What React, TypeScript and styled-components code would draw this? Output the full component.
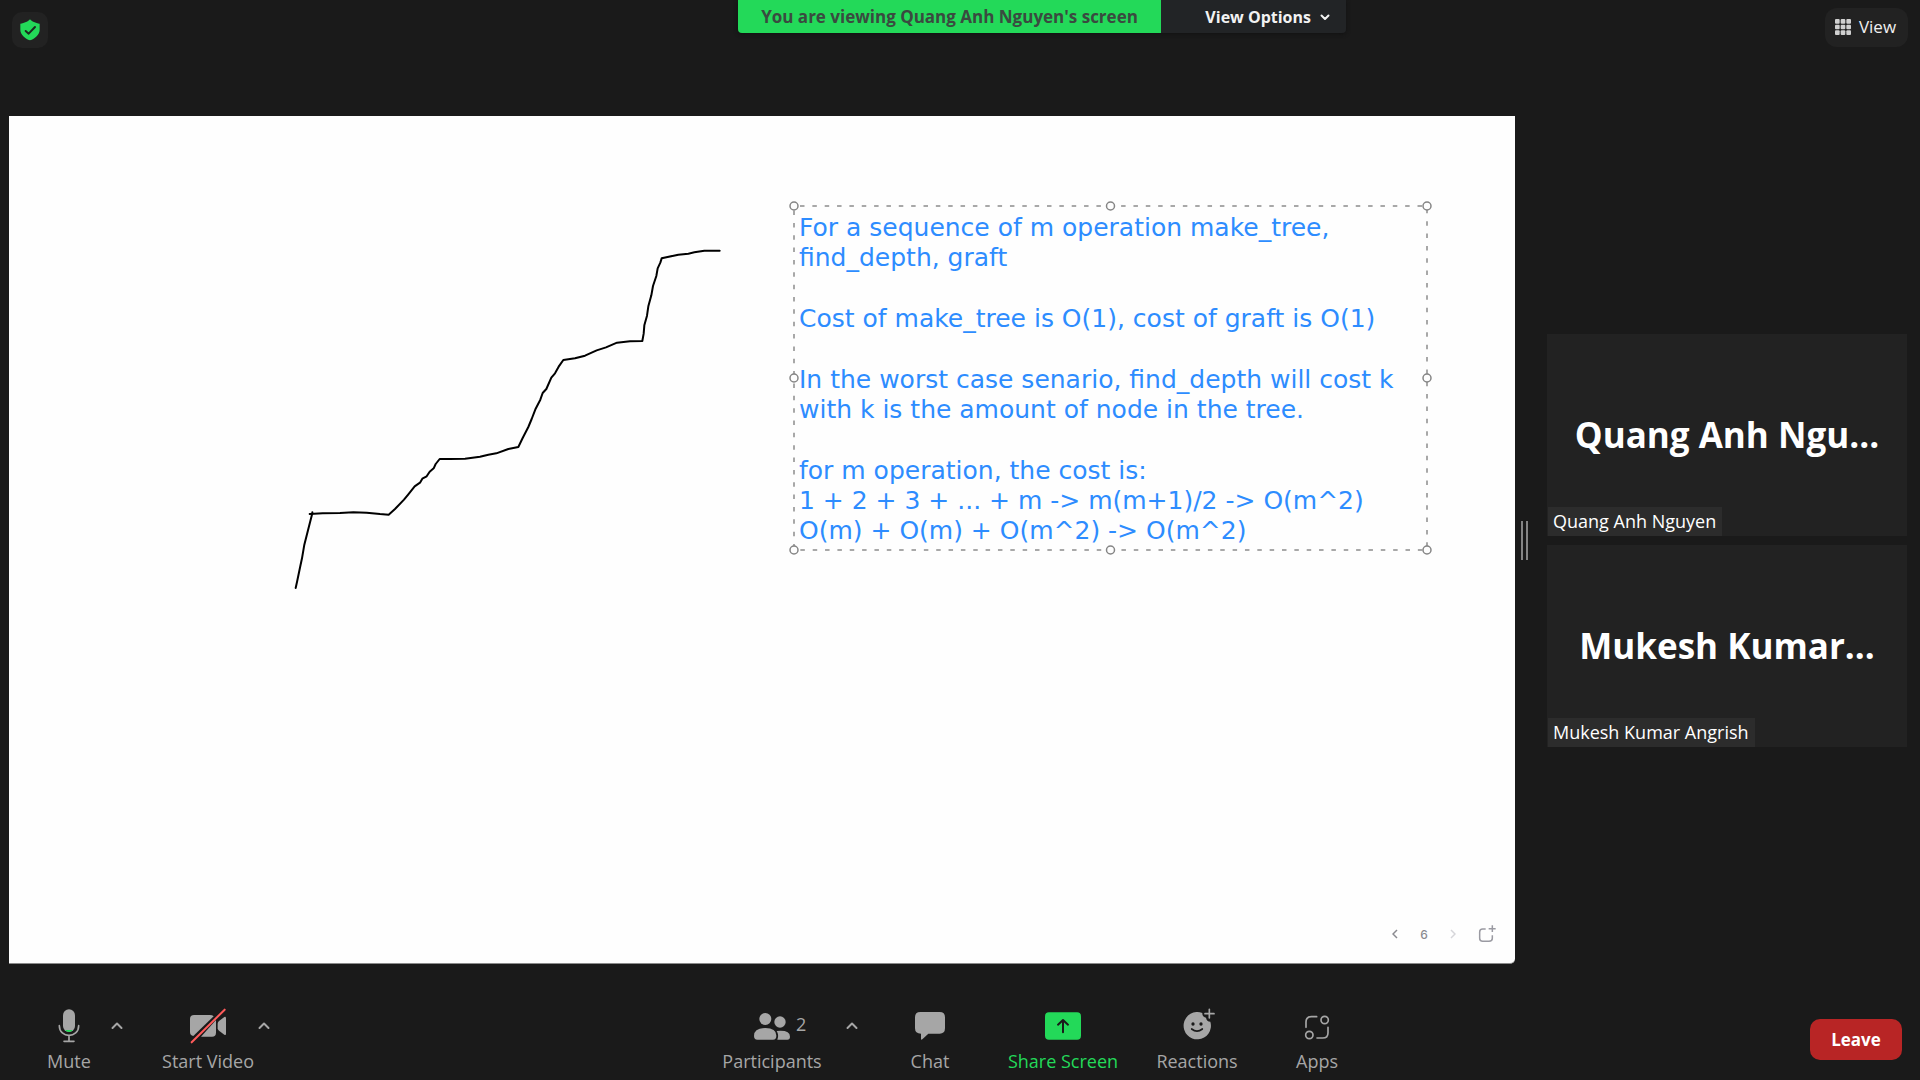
import React from "react";
import styled, { createGlobalStyle } from "styled-components";

const UI_FONT = `"Segoe UI", "Open Sans", "Noto Sans", sans-serif`;
const NOTE_FONT = `Verdana, "DejaVu Sans", sans-serif`;
const GREEN = "#23d959";
const GREY = "#a6a6a6";
const BG = "#1a1a1a";

const GlobalStyle = createGlobalStyle`
  *, *::before, *::after { box-sizing: border-box; }
  body { margin: 0; background: ${BG}; font-family: ${UI_FONT}; }
  button { margin: 0; padding: 0; border: 0; background: none; font: inherit; color: inherit; cursor: pointer; }
  svg { display: block; }
`;

const Page = styled.div`
  display: flex;
  flex-direction: column;
  min-height: 100vh;
  background: ${BG};
  color: #fff;
`;

/* ---------- top bar ---------- */

const TopBar = styled.header`
  display: grid;
  grid-template-columns: 9fr auto 7fr;
  align-items: start;
  min-height: 116px;
`;

const ShieldButton = styled.button`
  display: grid;
  place-items: center;
  width: 36px;
  height: 36px;
  margin: 12px;
  border-radius: 10px;
  background: #222;
`;

const Banner = styled.div`
  display: flex;
  height: 33px;
  border-radius: 0 0 4px 4px;
  overflow: hidden;
  font-size: 17px;
  line-height: 34px;
  font-weight: 700;
  white-space: nowrap;
  box-shadow: 0 1px 4px #111;
`;

const BannerText = styled.div`
  min-width: 423px;
  padding: 0 12px;
  text-align: center;
  background: ${GREEN};
  color: #3a4a40;
`;

const ViewOptions = styled.button`
  display: flex;
  align-items: center;
  justify-content: flex-end;
  gap: 9px;
  min-width: 185px;
  padding: 0 16px;
  background: #222426;
  color: #f2f2f2;
  font-size: 16px;
`;

const ViewButton = styled.button`
  display: flex;
  align-items: center;
  justify-content: center;
  justify-self: end;
  gap: 8px;
  width: 83px;
  height: 39px;
  margin: 8px 12px;
  padding: 0 2px 2px 0;
  border-radius: 12px;
  background: #222;
  color: #f0f0f0;
  font-size: 17px;
`;

/* ---------- shared board ---------- */

const Main = styled.main`
  display: flex;
  flex: 1;
  padding: 0 13px 0 9px;
`;

const Board = styled.section`
  position: relative;
  display: flex;
  flex: 1;
  flex-direction: column;
  align-items: flex-end;
  justify-content: flex-end;
  min-width: 0;
  border-bottom: 1px solid #8a8a8a;
  border-radius: 0 0 5px 0;
  background: #fefefe;
`;

const Sketch = styled.svg`
  position: absolute;
  left: 271px;
  top: 114px;
  width: 460px;
  height: 370px;
`;

const Note = styled.div`
  position: absolute;
  left: 785px;
  top: 90px;
  display: flex;
  flex-direction: column;
  gap: 31px;
  width: 633px;
  padding: 7px 0 4px 5px;
  color: #2d8cff;
  font-family: ${NOTE_FONT};
  font-size: 25px;
  line-height: 30px;
  white-space: nowrap;

  p { margin: 0; }
`;

const NoteFrame = styled.svg`
  position: absolute;
  inset: 0;
  width: 100%;
  height: 100%;
  overflow: visible;
`;

const Pager = styled.nav`
  display: flex;
  align-items: center;
  gap: 16px;
  padding: 0 19px 19px 0;
  color: #8a8a90;
  font-family: Inter, sans-serif;
  font-size: 12px;
  font-weight: 500;
`;

const PagerButton = styled.button`
  display: grid;
  place-items: center;
  width: 18px;
  height: 20px;

  &:disabled { color: #d6d6da; }
`;

const PageNumber = styled.span`
  width: 8px;
  text-align: center;
`;

/* ---------- side panel ---------- */

const Divider = styled.div`
  display: flex;
  align-items: center;
  width: 32px;
  padding-left: 6px;
`;

const Grip = styled.span`
  width: 7px;
  height: 39px;
  border: solid #858585;
  border-width: 0 2px;
`;

const Gallery = styled.aside`
  display: flex;
  flex-direction: column;
  justify-content: center;
  gap: 9px;
  width: 360px;
  padding-top: 1px;
`;

const Tile = styled.article`
  position: relative;
  display: grid;
  place-items: center;
  height: 202px;
  background: #222;
`;

const TileName = styled.h2`
  margin: 0;
  font-size: 35px;
  line-height: 48px;
  font-weight: 700;
`;

const TileTag = styled.span`
  position: absolute;
  left: 1px;
  bottom: 0;
  padding: 0 6px 0 5px;
  background: #2c2c2c;
  font-size: 18px;
  line-height: 29px;
`;

/* ---------- toolbar ---------- */

const Toolbar = styled.footer`
  display: flex;
  align-items: flex-start;
  justify-content: space-between;
  min-height: 116px;
  padding: 44px 18px 7px 29px;
  color: ${GREY};
`;

const Group = styled.div<{ $end?: number }>`
  display: flex;
  padding-right: ${(p) => p.$end ?? 0}px;
`;

const Tool = styled.button<{ $width: number; $accent?: boolean; $before?: number }>`
  display: flex;
  flex-direction: column;
  gap: 5px;
  width: ${(p) => p.$width}px;
  margin-left: ${(p) => p.$before ?? 0}px;
  color: ${(p) => (p.$accent ? GREEN : "inherit")};
  font-size: 18px;
  line-height: 24px;
  font-weight: 500;
  text-align: center;
  white-space: nowrap;
`;

const IconRow = styled.span`
  display: grid;
  grid-template-columns: 1fr 36px 1fr;
  width: 100%;
`;

const ToolIcon = styled.svg`
  grid-column: 2;
  width: 36px;
  height: 36px;
`;

const Count = styled.span`
  padding: 4px 6px;
  text-align: left;
`;

const ToolLabel = styled.span`
  width: 100%;
`;

const CaretButton = styled.button`
  display: grid;
  place-items: center;
  width: 16px;
  height: 36px;
`;

const LeaveButton = styled.button`
  width: 92px;
  height: 41px;
  margin-top: 11px;
  border-radius: 10px;
  background: #b82525;
  color: #fff;
  font-size: 17px;
  font-weight: 700;
`;

const Caret = ({ label }: { label: string }) => (
  <CaretButton aria-label={label}>
    <svg width="12" height="8" viewBox="0 0 12 8" fill="none" stroke="currentColor" strokeWidth="2" strokeLinecap="round" strokeLinejoin="round">
      <path d="M1.5 6 6 1.5 10.5 6" />
    </svg>
  </CaretButton>
);

type ToolItemProps = {
  label: string;
  width: number;
  viewBox: string;
  count?: number;
  accent?: boolean;
  before?: number;
  children: React.ReactNode;
};

const ToolItem = ({ label, width, viewBox, count, accent, before, children }: ToolItemProps) => (
  <Tool $width={width} $accent={accent} $before={before}>
    <IconRow>
      <ToolIcon viewBox={viewBox} fill="currentColor" aria-hidden="true">
        {children}
      </ToolIcon>
      {count !== undefined && <Count>{count}</Count>}
    </IconRow>
    <ToolLabel>{label}</ToolLabel>
  </Tool>
);

const HANDLES = [
  ["0%", "0%"], ["50%", "0%"], ["100%", "0%"],
  ["0%", "50%"], ["100%", "50%"],
  ["0%", "100%"], ["50%", "100%"], ["100%", "100%"],
];

const PEOPLE = [
  { short: "Quang Anh Ngu...", full: "Quang Anh Nguyen" },
  { short: "Mukesh Kumar...", full: "Mukesh Kumar Angrish" },
];

export default function App() {
  return (
    <Page>
      <GlobalStyle />
      <TopBar>
        <ShieldButton aria-label="Meeting information">
          <svg width="20" height="22" viewBox="0 0 60 66">
            <path d="M30 1C35 7 47 13 59 14V32C59 46 45 59 30 64 15 59 1 46 1 32V14C13 13 25 7 30 1Z" fill={GREEN} />
            <path d="M17 36 26 44 45 24" fill="none" stroke="#1c2a20" strokeWidth="6" strokeLinecap="round" strokeLinejoin="round" />
          </svg>
        </ShieldButton>
        <Banner>
          <BannerText>You are viewing Quang Anh Nguyen's screen</BannerText>
          <ViewOptions>
            View Options
            <svg width="10" height="8" viewBox="0 0 10 8" fill="none" stroke="currentColor" strokeWidth="2" strokeLinecap="round" strokeLinejoin="round">
              <path d="M1.5 2.5 5 6 8.500 2.500" />
            </svg>
          </ViewOptions>
        </Banner>
        <ViewButton>
          <svg width="16" height="16" viewBox="0 0 48 48" fill="#d0d0d0">
            {[0, 17, 34].map((y) => [0, 17, 34].map((x) => <rect key={`${x}-${y}`} x={x} y={y} width="14" height="14" rx="3" />))}
          </svg>
          View
        </ViewButton>
      </TopBar>

      <Main>
        <Board>
          <Sketch viewBox="0 0 1380 1110" fill="none" stroke="#000" strokeWidth="6" strokeLinecap="round" strokeLinejoin="round" role="img" aria-label="Staircase curve">
            <path d="M47 1074 51 1056 61 1008 66 985 73 944 84 901 97 850 97 847" />
            <path d="M89 852 128 850 180 849 220 847 260 848 300 852 326 854 345 837 372 809 385 793 404 769 420 758 427 746 440 739 449 725 461 715 467 702 479 687 510 687 555 686 600 680 625 674 649 670 685 657 715 651 728 624 745 591 755 567 767 536 781 509 788 489 799 477 814 443 825 430 836 410 850 390 885 385 915 377 950 361 978 352 1011 338 1050 334 1087 333 1091 311 1093 286 1101 257 1105 229 1114 196 1119 168 1129 138 1133 115 1141 98 1145 85 1195 74 1225 71 1243 67 1273 62 1319 62" />
          </Sketch>
          <Note>
            <NoteFrame aria-hidden="true">
              <rect width="100%" height="100%" fill="none" stroke="#8c8c8c" strokeWidth="1.500" strokeDasharray="4.500 7.850" strokeDashoffset="-6" />
              {HANDLES.map(([cx, cy]) => (
                <circle key={cx + cy} cx={cx} cy={cy} r="4" fill="#fefefe" stroke="#858585" strokeWidth="1.500" />
              ))}
            </NoteFrame>
            <p>For a sequence of m operation make_tree,<br />find_depth, graft</p>
            <p>Cost of make_tree is O(1), cost of graft is O(1)</p>
            <p>In the worst case senario, find_depth will cost k<br />with k is the amount of node in the tree.</p>
            <p>for m operation, the cost is:<br />1 + 2 + 3 + ... + m -&gt; m(m+1)/2 -&gt; O(m^2)<br />O(m) + O(m) + O(m^2) -&gt; O(m^2)</p>
          </Note>
          <Pager aria-label="Whiteboard pages">
            <PagerButton aria-label="Previous page">
              <svg width="6" height="10" viewBox="0 0 6 10" fill="none" stroke="currentColor" strokeWidth="1.500"><path d="M5 1 1 5l4 4" /></svg>
            </PagerButton>
            <PageNumber>6</PageNumber>
            <PagerButton aria-label="Next page" disabled>
              <svg width="6" height="10" viewBox="0 0 6 10" fill="none" stroke="currentColor" strokeWidth="1.500"><path d="M1 1l4 4-4 4" /></svg>
            </PagerButton>
            <PagerButton aria-label="New page">
              <svg width="18" height="18" viewBox="0 0 54 54" fill="none" stroke="#9a9aa2" strokeWidth="4.500">
                <path d="M23 12H14Q5 12 5 21V40Q5 49 14 49H33Q43 49 43 40V31M43 1V21M32 11H53" />
              </svg>
            </PagerButton>
          </Pager>
        </Board>
        <Divider><Grip /></Divider>
        <Gallery>
          {PEOPLE.map((p) => (
            <Tile key={p.full}>
              <TileName>{p.short}</TileName>
              <TileTag>{p.full}</TileTag>
            </Tile>
          ))}
        </Gallery>
      </Main>

      <Toolbar>
        <Group>
          <ToolItem label="Mute" width={80} viewBox="153 84 108 108">
            <rect x="189" y="88" width="36" height="68" rx="18" />
            <path d="M195 150H219Q214 156 207 156T195 150Z" fill={GREEN} />
            <path d="M178 137C178 176 236 176 236 137M207 166V184M192 184H222" fill="none" stroke="currentColor" strokeWidth="5" strokeLinecap="round" />
          </ToolItem>
          <Caret label="Audio options" />
          <ToolItem label="Start Video" width={96} before={35} viewBox="570 84 108 108">
            <path d="M582 105H630Q637 105 641 109L580 168Q570 166 570 156V117Q570 105 582 105Z" />
            <path d="M648 120V158Q648 170 636 170H603Z" />
            <path d="M653 131Q653 126 657 123L673 111Q678 109 678 115V161Q678 167 673 164L657 152Q653 149 653 145Z" />
            <path d="M575 187 674 89" fill="none" stroke="#ff5b5b" strokeWidth="6" strokeLinecap="round" />
          </ToolItem>
          <Caret label="Video options" />
        </Group>

        <Group $end={16}>
          <ToolItem label="Participants" width={144} count={2} viewBox="162 84 108 108">
            <circle cx="196" cy="117" r="18" />
            <circle cx="240" cy="126" r="17" />
            <path d="M162 168Q162 144 196 144T229 168Q229 179 219 179H172Q162 179 162 168Z" />
            <path d="M230 153Q270 149 270 170 270 179 262 179H232Q238 166 230 153Z" />
          </ToolItem>
          <Caret label="Participant options" />
          <ToolItem label="Chat" width={140} viewBox="636 84 108 108">
            <path d="M661 96H719Q735 96 735 112V145Q735 161 719 161H685L667 178Q663 181 663 176V161Q645 161 645 145V112Q645 96 661 96Z" />
          </ToolItem>
          <ToolItem label="Share Screen" width={126} accent viewBox="135 84 108 108">
            <rect x="135" y="97" width="108" height="82" rx="12" />
            <path d="M189 157V121M174 134 189 120 204 134" fill="none" stroke={BG} strokeWidth="6" strokeLinecap="round" strokeLinejoin="round" />
          </ToolItem>
          <ToolItem label="Reactions" width={142} viewBox="537 84 108 108">
            <path d="M607 99A41 41 0 1 0 631 125Q620 125 618 113 606 111 607 99Z" />
            <circle cx="579" cy="132" r="5" fill={BG} />
            <circle cx="603" cy="132" r="5" fill={BG} />
            <path d="M575 147Q591 160 607 147" fill="none" stroke={BG} strokeWidth="5" strokeLinecap="round" />
            <path d="M628 88V114M615 101H642" fill="none" stroke="currentColor" strokeWidth="5" strokeLinecap="round" />
          </ToolItem>
          <ToolItem label="Apps" width={98} viewBox="897 84 108 108">
            <g fill="none" stroke="currentColor" strokeWidth="5" strokeLinecap="round">
              <path d="M918 142V126Q918 110 934 110H950M951 174H968Q984 174 984 158V142" />
              <circle cx="974" cy="120" r="11" />
              <circle cx="928" cy="165" r="11" />
            </g>
          </ToolItem>
        </Group>

        <LeaveButton>Leave</LeaveButton>
      </Toolbar>
    </Page>
  );
}
